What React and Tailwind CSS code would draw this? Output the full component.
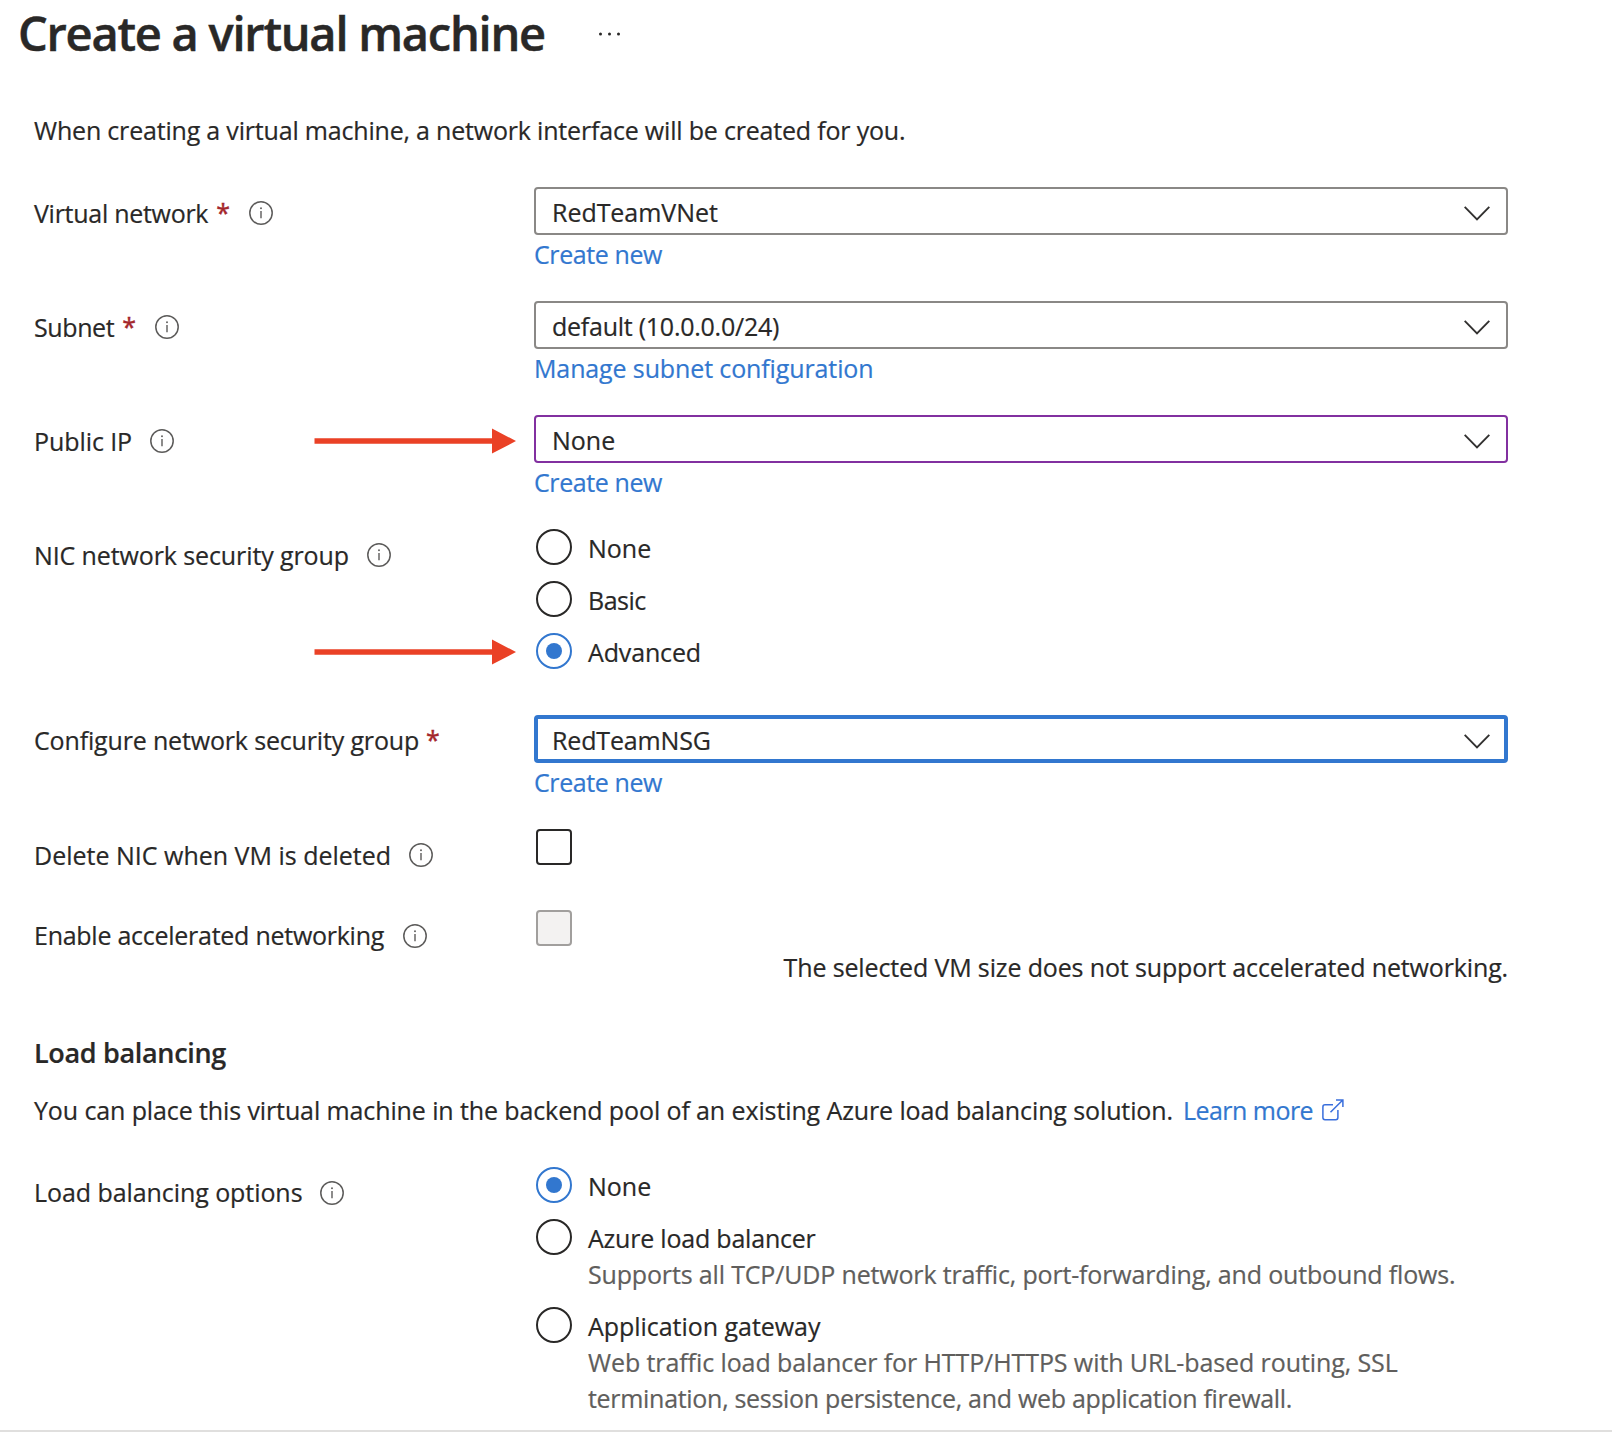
import React from "react";

const Info = ({ className }) => (
  <svg className={"h-6 w-6 shrink-0 " + className} viewBox="0 0 24 24" fill="none" stroke="#5c5b5a">
    <circle cx="12" cy="12" r="11.2" strokeWidth="1.5" />
    <path d="M12 10V17.2" strokeWidth="1.4" />
    <circle cx="12" cy="7.3" r="0.95" fill="#5c5b5a" stroke="none" />
  </svg>
);

const Chevron = () => (
  <svg className="mt-[5px] h-[15px] w-[26px]" viewBox="0 0 26 15" fill="none" stroke="#323130" strokeWidth="1.9">
    <path d="M0.7 0.9L13 13.3L25.3 0.9" />
  </svg>
);

const Arrow = ({ className }) => (
  <svg className={"absolute left-[280px] h-[26px] w-[202px] " + className} viewBox="0 0 202 26" fill="#ea4126">
    <path d="M0.5 10.3H178V0.5L202 13L178 25.5V15.7H0.5Z" />
  </svg>
);

function Row({ label, labelClass, required, info, gap, children }) {
  return (
    <div className={"flex items-start " + gap}>
      <div className="flex h-9 w-[500px] shrink-0 items-start">
        <span className={"whitespace-nowrap " + labelClass}>{label}</span>
        {required && <span className={"w-[14px] text-[#a4262c] [-webkit-text-stroke:0.4px] " + required}>*</span>}
        {info && <Info className={"mt-[14px] " + info} />}
      </div>
      <div className="w-[974px]">{children}</div>
    </div>
  );
}

function Select({ value, tracking, border, link, linkTracking }) {
  return (
    <div>
      <div className={"flex h-12 items-center justify-between rounded-[4px] " + border}>
        <span className={"pt-[2px] " + tracking}>{value}</span>
        <Chevron />
      </div>
      <a className={"mt-px block text-[#3277cf] " + linkTracking}>{link}</a>
    </div>
  );
}

function Radio({ label, tracking, checked, children }) {
  return (
    <div className="flex pl-[2px]">
      <span
        className={
          "flex h-9 w-9 shrink-0 items-center justify-center rounded-full border-2 " +
          (checked ? "border-[#3277cf]" : "border-[#292827]")
        }
      >
        {checked && <span className="h-4 w-4 rounded-full bg-[#3277cf]" />}
      </span>
      <div className="ml-4 pt-px">
        <div className={tracking}>{label}</div>
        {children}
      </div>
    </div>
  );
}

const grey = "border-2 border-[#8a8886] pl-4 pr-4";

export default function App() {
  return (
    <div className="h-[1432px] w-[1612px] overflow-hidden border-b-2 border-[#e0dfde] bg-white font-['Open_Sans','Noto_Sans',sans-serif] text-[25px] leading-9 text-[#292827] [-webkit-text-stroke:0.2px]">
      <header className="flex h-[67px] items-start pl-[18px]">
        <h1 className="whitespace-nowrap text-[47px] font-semibold leading-[66px] tracking-[-1.24px] [-webkit-text-stroke:0.5px]">Create a virtual machine</h1>
        <svg className="ml-[53px] mt-[32px] h-1 w-6" viewBox="0 0 24 4" fill="#292827">
          <circle cx="2.5" cy="2" r="1.5" />
          <circle cx="11.5" cy="2" r="1.5" />
          <circle cx="20.5" cy="2" r="1.5" />
        </svg>
      </header>

      <main className="pl-[34px]">
        <p className="mt-[45px] tracking-[-0.19px]">When creating a virtual machine, a network interface will be created for you.</p>

        <div className="mt-[39px]">
          <Row label="Virtual network" labelClass="mt-2 tracking-[-0.28px]" required="ml-2 mt-[7px]" info="ml-[19px]" gap="mb-[29px]">
            <Select value="RedTeamVNet" tracking="tracking-[-0.04px]" border={grey} link="Create new" linkTracking="tracking-[-0.4px]" />
          </Row>
          <Row label="Subnet" labelClass="mt-2 tracking-[-0.4px]" required="ml-2 mt-[7px]" info="ml-[19px]" gap="mb-[29px]">
            <Select value="default (10.0.0.0/24)" tracking="tracking-[-0.25px]" border={grey} link="Manage subnet configuration" linkTracking="tracking-[-0.12px]" />
          </Row>
          <div className="relative">
            <Arrow className="top-[13px]" />
            <Row label="Public IP" labelClass="mt-2 tracking-[-0.08px]" info="ml-[18px]" gap="mb-[29px]">
              <Select value="None" tracking="" border="border-2 border-[#8230a0] pl-4 pr-4" link="Create new" linkTracking="tracking-[-0.4px]" />
            </Row>
          </div>
          <div className="relative">
            <Arrow className="top-[110px]" />
            <Row label="NIC network security group" labelClass="mt-2 tracking-[-0.11px]" info="ml-[18px]" gap="mb-[45px]">
              <div className="flex flex-col gap-[15px]">
                <Radio label="None" tracking="" />
                <Radio label="Basic" tracking="tracking-[-0.5px]" />
                <Radio label="Advanced" tracking="tracking-[-0.15px]" checked />
              </div>
            </Row>
          </div>
          <Row label="Configure network security group" labelClass="mt-[7px] tracking-[-0.16px]" required="ml-[7px] mt-[6px]" gap="mb-[29px]">
            <Select value="RedTeamNSG" tracking="tracking-[-0.15px]" border="border-4 border-[#3277cf] pl-[14px] pr-[14px]" link="Create new" linkTracking="tracking-[-0.4px]" />
          </Row>
          <Row label="Delete NIC when VM is deleted" labelClass="mt-2" info="ml-[18px]" gap="mb-[45px]">
            <div className="ml-[2px] h-9 w-9 rounded-[4px] border-2 border-[#292827]" />
          </Row>
          <Row label="Enable accelerated networking" labelClass="mt-[7px] tracking-[-0.26px]" info="ml-[19px]" gap="">
            <div className="ml-[2px] h-9 w-9 rounded-[4px] border-2 border-[#a19f9d] bg-[#f3f2f1]" />
          </Row>
        </div>

        <p className="mt-[3px] w-[1474px] text-right tracking-[-0.14px]">The selected VM size does not support accelerated networking.</p>

        <h2 className="mt-[50px] text-[27px] font-semibold tracking-[-0.33px]">Load balancing</h2>
        <p className="mt-[21px] flex whitespace-nowrap">
          <span className="tracking-[-0.11px]">You can place this virtual machine in the backend pool of an existing Azure load balancing solution.</span>
          <a className="ml-[10px] flex text-[#3277cf]">
            <span className="tracking-[-0.53px]">Learn more</span>
            <svg className="ml-[9px] mt-[7px] h-[22px] w-[22px]" viewBox="0 0 22 22" fill="none" stroke="#3a6fdc" strokeWidth="1.5">
              <path d="M11 5.8H3Q0.9 5.8 0.9 7.9V18.6Q0.9 20.7 3 20.7H13.8Q15.9 20.7 15.9 18.6V11" />
              <path d="M8.5 13.3L20.8 1M14 1H20.9V8" />
            </svg>
          </a>
        </p>

        <div className="mt-[39px]">
          <Row label="Load balancing options" labelClass="mt-[7px] tracking-[-0.07px]" info="ml-[18px]" gap="">
            <Radio label="None" tracking="" checked />
            <div className="h-[15px]" />
            <Radio label="Azure load balancer" tracking="tracking-[-0.21px]">
              <div className="text-[#605e5c] tracking-[-0.16px]">Supports all TCP/UDP network traffic, port-forwarding, and outbound flows.</div>
            </Radio>
            <div className="h-[15px]" />
            <Radio label="Application gateway" tracking="tracking-[-0.04px]">
              <div className="text-[#605e5c] tracking-[-0.09px]">Web traffic load balancer for HTTP/HTTPS with URL-based routing, SSL</div>
              <div className="text-[#605e5c] tracking-[-0.3px]">termination, session persistence, and web application firewall.</div>
            </Radio>
          </Row>
        </div>
      </main>
    </div>
  );
}
